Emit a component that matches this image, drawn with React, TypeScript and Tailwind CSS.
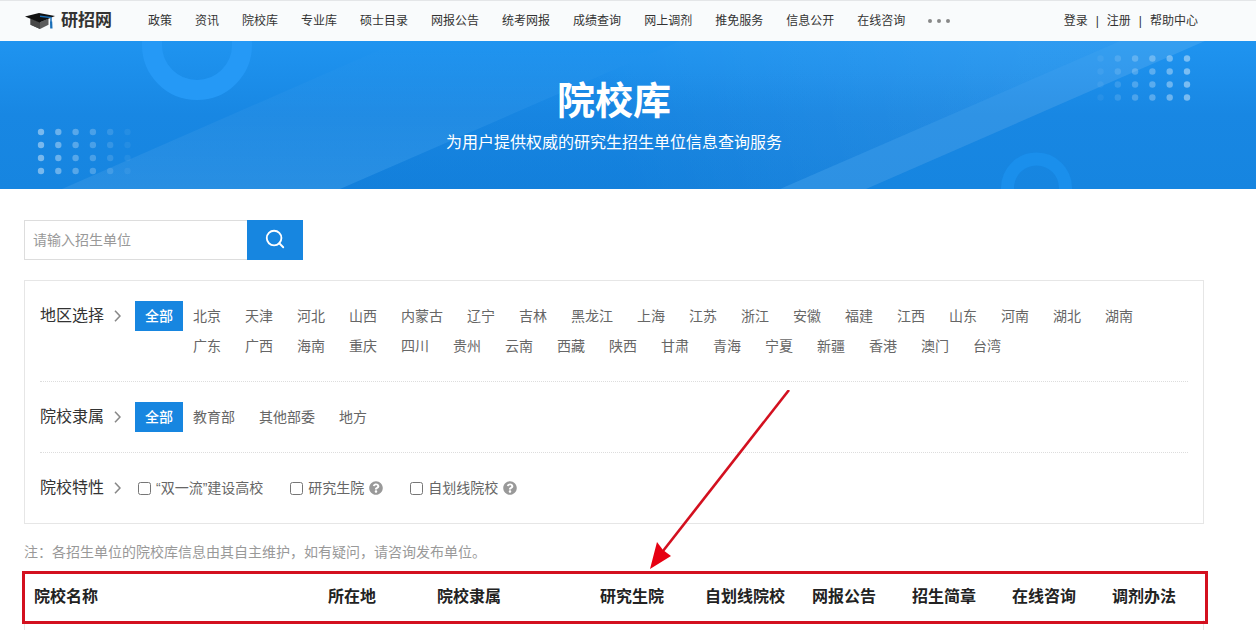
import { useState } from "react";
import { Search } from "lucide-react";
import { FaQuestionCircle } from "react-icons/fa";

const navItems = [
  "政策",
  "资讯",
  "院校库",
  "专业库",
  "硕士目录",
  "网报公告",
  "统考网报",
  "成绩查询",
  "网上调剂",
  "推免服务",
  "信息公开",
  "在线咨询",
];

const regions = [
  "北京", "天津", "河北", "山西", "内蒙古", "辽宁", "吉林", "黑龙江", "上海", "江苏", "浙江", "安徽",
  "福建", "江西", "山东", "河南", "湖北", "湖南", "广东", "广西", "海南", "重庆", "四川", "贵州",
  "云南", "西藏", "陕西", "甘肃", "青海", "宁夏", "新疆", "香港", "澳门", "台湾",
];

const affiliations = ["教育部", "其他部委", "地方"];

const features = [
  { id: "syl", label: "“双一流”建设高校", help: false },
  { id: "yjsy", label: "研究生院", help: true },
  { id: "zhx", label: "自划线院校", help: true },
];

const dotOpacity = [0.42, 0.36, 0.28, 0.22, 0.13, 0.06];

function Logo() {
  return (
    <a href="#" className="flex items-center gap-1.5">
      <svg className="h-[18px] w-[30px]" viewBox="0 0 30 18">
        <path d="M5.500 6.500v6.300L15 17l8.500-4.200V6.500l-9 4z" fill="#5c5c5c" />
        <path d="M5.500 6.500v6.300L15 17v-7z" fill="#484848" />
        <path d="M0 4.500 14 1l16 3-15.500 6.500z" fill="#111" />
        <path d="M15 4.200 26 5.600v6" fill="none" stroke="#1a6fb8" strokeWidth="1.500" />
        <path d="M25 9.500h2.200l.3 7h-2.300z" fill="#1a6fb8" />
      </svg>
      <span className="text-[17px] leading-6 font-bold text-[#333]">研招网</span>
    </a>
  );
}

function Header() {
  return (
    <header className="h-[41px] border-t border-[#e4e6e8] bg-[#f9fbfc] pl-[25px] pr-[58px] flex items-center text-xs text-[#333]">
      <Logo />
      <nav className="ml-9 flex items-center gap-[23px]">
        {navItems.map((item) => (
          <a key={item} href="#" className="whitespace-nowrap">
            {item}
          </a>
        ))}
        <button type="button" aria-label="更多" className="flex gap-[5px] p-0">
          <span className="size-1 rounded-full bg-[#888]" />
          <span className="size-1 rounded-full bg-[#888]" />
          <span className="size-1 rounded-full bg-[#888]" />
        </button>
      </nav>
      <div className="ml-auto flex items-center gap-2 whitespace-nowrap">
        <a href="#">登录</a>
        <span>|</span>
        <a href="#">注册</a>
        <span>|</span>
        <a href="#">帮助中心</a>
      </div>
    </header>
  );
}

function BannerArt() {
  return (
    <svg
      className="absolute inset-0 h-full w-full"
      viewBox="0 0 1256 148"
      preserveAspectRatio="xMidYMid slice"
      aria-hidden="true"
    >
      <defs>
        <linearGradient id="bandLeft" x1="0" y1="1" x2="0" y2="0">
          <stop offset="0" stopColor="#fff" stopOpacity="0.08" />
          <stop offset="1" stopColor="#fff" stopOpacity="0" />
        </linearGradient>
        <linearGradient id="middleShade" x1="0" y1="1" x2="0" y2="0">
          <stop offset="0" stopColor="#0060c0" stopOpacity="0.15" />
          <stop offset="0.8" stopColor="#0060c0" stopOpacity="0" />
        </linearGradient>
        <linearGradient id="middleGlow" gradientUnits="userSpaceOnUse" x1="620" y1="140" x2="1020" y2="0">
          <stop offset="0" stopColor="#fff" stopOpacity="0" />
          <stop offset="1" stopColor="#fff" stopOpacity="0.07" />
        </linearGradient>
      </defs>
      <circle cx="197" cy="4" r="45" fill="none" stroke="#2599f6" strokeWidth="20" />
      <path d="M62 148 400 0H680L340 148z" fill="url(#bandLeft)" />
      <path d="M340 148 680 0H1120L780 148z" fill="url(#middleShade)" />
      <path d="M340 148 680 0H1120L780 148z" fill="url(#middleGlow)" />
      <path d="M780 148 1120 0H1205L866 148z" fill="#fff" fillOpacity="0.1" />
      <circle cx="1036.500" cy="147" r="29" fill="none" stroke="#1a8fec" strokeWidth="13" />
      {dotOpacity.map((opacity, col) =>
        [0, 1, 2, 3].map((row) => (
          <g key={`${col}-${row}`} fill="#fff" fillOpacity={opacity}>
            <circle cx={41 + col * 17.3} cy={91 + row * 13} r="3.200" />
            <circle cx={1187 - col * 17.3} cy={17.5 + row * 13} r="3.200" />
          </g>
        ))
      )}
    </svg>
  );
}

function Banner() {
  return (
    <section className="relative h-[148px] bg-linear-to-b from-[#1f94f0] via-[#1887e3] to-[#1685e0] pl-6 pr-[52px] pt-8 text-center text-white">
      <BannerArt />
      <h1 className="relative text-[38px] leading-[56px] font-bold">院校库</h1>
      <p className="relative text-base leading-7">为用户提供权威的研究生招生单位信息查询服务</p>
    </section>
  );
}

function FilterRow({ title, children }: { title: string; children: React.ReactNode }) {
  return (
    <div className="flex border-t border-dotted border-[#ddd] py-5 first:border-t-0">
      <div className="flex h-[30px] w-[95px] shrink-0 items-center gap-2.5 text-base text-[#333]">
        {title}
        <svg className="h-3 w-[7px]" viewBox="0 0 7 12" fill="none" stroke="#888" strokeWidth="1.600">
          <path d="M1 .8 6 6 1 11.200" />
        </svg>
      </div>
      {children}
    </div>
  );
}

function OptionList({ options }: { options: string[] }) {
  const [selected, setSelected] = useState("全部");

  const colors = (option: string) =>
    selected === option ? "bg-[#1786e0] text-white font-medium" : "text-[#666]";

  return (
    <>
      <button
        type="button"
        onClick={() => setSelected("全部")}
        className={`h-[30px] shrink-0 px-2.5 ${colors("全部")}`}
      >
        全部
      </button>
      <div className="flex flex-wrap gap-x-1">
        {options.map((option) => (
          <button
            key={option}
            type="button"
            onClick={() => setSelected(option)}
            className={`h-[30px] px-2.5 ${colors(option)}`}
          >
            {option}
          </button>
        ))}
      </div>
    </>
  );
}

export default function App() {
  const [keyword, setKeyword] = useState("");

  return (
    <div className="bg-white font-['Liberation_Sans','Noto_Sans_CJK_SC',sans-serif] text-sm">
      <Header />
      <Banner />

      <main className="relative ml-6 mr-[52px] pt-[31px]">
        {/* Search */}
        <form onSubmit={(e) => e.preventDefault()} className="flex h-10">
          <input
            type="text"
            aria-label="招生单位"
            value={keyword}
            onChange={(e) => setKeyword(e.target.value)}
            placeholder="请输入招生单位"
            className="w-[223px] border border-r-0 border-[#ddd] px-2 text-[#333] outline-none placeholder:text-[#999]"
          />
          <button
            type="submit"
            aria-label="搜索"
            className="flex w-14 items-center justify-center bg-[#1786e0] pb-0.5 text-white"
          >
            <Search size={22} strokeWidth={2} />
          </button>
        </form>

        {/* Filters */}
        <section className="mt-5 border border-[#e6e6e6] px-[15px]">
          <FilterRow title="地区选择">
            <OptionList options={regions} />
          </FilterRow>
          <FilterRow title="院校隶属">
            <OptionList options={affiliations} />
          </FilterRow>
          <FilterRow title="院校特性">
            <div className="ml-[3px] flex items-center gap-[27px] text-[#666]">
              {features.map((feature) => (
                <div key={feature.id} className="flex items-center gap-[5px]">
                  <input id={feature.id} type="checkbox" className="size-[13px]" />
                  <label htmlFor={feature.id}>{feature.label}</label>
                  {feature.help && <FaQuestionCircle size={14} color="#999" />}
                </div>
              ))}
            </div>
          </FilterRow>
        </section>

        <p className="mt-[18px] leading-5 text-[#999]">
          注：各招生单位的院校库信息由其自主维护，如有疑问，请咨询发布单位。
        </p>

        {/* Result table */}
        <div className="relative mt-3">
          <table className="w-full table-fixed text-base text-[#222]">
            <colgroup>
              <col />
              <col className="w-[109px]" />
              <col className="w-[141px]" />
              <col className="w-[128px]" />
              <col className="w-[98px]" />
              <col className="w-[100px]" />
              <col className="w-[100px]" />
              <col className="w-[100px]" />
              <col className="w-[110px]" />
            </colgroup>
            <thead>
              <tr className="h-[46px]">
                <th className="pl-2.5 text-left">院校名称</th>
                <th className="pl-2.5 text-left">所在地</th>
                <th className="pl-2.5 text-left">院校隶属</th>
                <th>研究生院</th>
                <th>自划线院校</th>
                <th>网报公告</th>
                <th>招生简章</th>
                <th>在线咨询</th>
                <th className="pr-2.5">调剂办法</th>
              </tr>
            </thead>
          </table>
          <div className="h-2.5 border-x border-[#e6e6e6]" />
          <div className="absolute -left-0.5 -right-1 -top-[3px] h-[53px] border-3 border-[#d3101f]" />
          <svg
            className="absolute -top-[184px] left-[625px] h-[181px] w-[142px]"
            viewBox="0 0 142 181"
            aria-hidden="true"
          >
            <path d="M140 0 14 161" stroke="#d3101f" strokeWidth="2.600" />
            <path d="M1 179 8 152 14 160 22 166z" fill="#e60012" />
          </svg>
        </div>
      </main>
    </div>
  );
}
